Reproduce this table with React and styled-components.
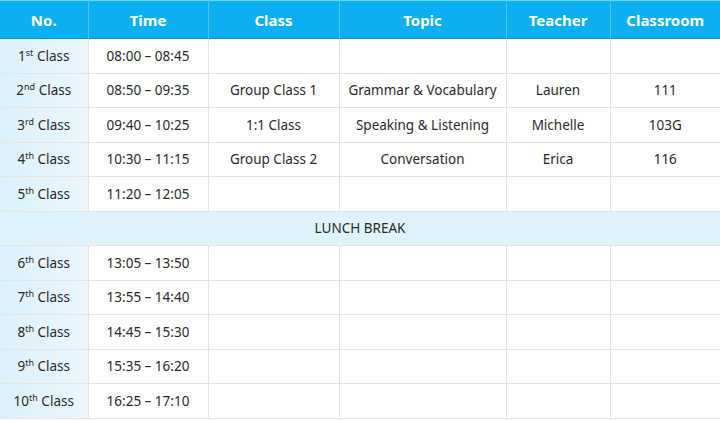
import React from "react";
import styled, { createGlobalStyle } from "styled-components";

const GlobalStyle = createGlobalStyle`
  html, body {
    margin: 0;
    padding: 0;
    background: #fff;
  }
  body {
    font-family: "Noto Sans", "Open Sans", sans-serif;
  }
`;

const Table = styled.table`
  width: 720px;
  border-collapse: collapse;
  table-layout: fixed;
  color: #2a2a2a;
  font-size: 13.5px;
`;

const Col = styled.col`
  width: ${(p) => p.$w}px;
`;

const HeadRow = styled.tr`
  height: 38px;
  background: #0cafef;
  border-top: 1px solid #6fd0f5;
  border-bottom: 1px solid #0a98d3;
`;

const Th = styled.th`
  color: #fff;
  font-weight: 700;
  font-size: 15px;
  padding: 0;
  border-left: 1px solid #4cc4f3;
  &:first-child {
    border-left: none;
  }
`;

const Row = styled.tr`
  height: 34.5px;
  border-bottom: 1px solid #e4e4e4;
`;

const Cell = styled.td`
  text-align: center;
  padding: 0;
  border-left: 1px solid #e4e4e4;
  &:first-child {
    border-left: none;
  }
`;

const NoCell = styled(Cell)`
  background: linear-gradient(to right, #dbf0fb, #eaf7fd);
`;

const BreakCell = styled.td`
  text-align: center;
  background: #def2fc;
`;

const Sup = styled.sup`
  font-size: 9px;
  vertical-align: 5px;
  line-height: 0;
`;

const widths = [88, 120, 131, 167, 104, 110];
const headers = ["No.", "Time", "Class", "Topic", "Teacher", "Classroom"];

const morning = [
  ["1", "st", "08:00 – 08:45", "", "", "", ""],
  ["2", "nd", "08:50 – 09:35", "Group Class 1", "Grammar & Vocabulary", "Lauren", "111"],
  ["3", "rd", "09:40 – 10:25", "1:1 Class", "Speaking & Listening", "Michelle", "103G"],
  ["4", "th", "10:30 – 11:15", "Group Class 2", "Conversation", "Erica", "116"],
  ["5", "th", "11:20 – 12:05", "", "", "", ""],
];

const afternoon = [
  ["6", "th", "13:05 – 13:50", "", "", "", ""],
  ["7", "th", "13:55 – 14:40", "", "", "", ""],
  ["8", "th", "14:45 – 15:30", "", "", "", ""],
  ["9", "th", "15:35 – 16:20", "", "", "", ""],
  ["10", "th", "16:25 – 17:10", "", "", "", ""],
];

const ClassRow = ({ data }) => {
  const [n, suf, time, cls, topic, teacher, room] = data;
  return (
    <Row>
      <NoCell>
        {n}
        <Sup>{suf}</Sup> Class
      </NoCell>
      <Cell>{time}</Cell>
      <Cell>{cls}</Cell>
      <Cell>{topic}</Cell>
      <Cell>{teacher}</Cell>
      <Cell>{room}</Cell>
    </Row>
  );
};

const App = () => {
  return (
    <>
      <GlobalStyle />
      <Table>
        <colgroup>
          {widths.map((w, i) => (
            <Col key={i} $w={w} />
          ))}
        </colgroup>
        <thead>
          <HeadRow>
            {headers.map((h) => (
              <Th key={h}>{h}</Th>
            ))}
          </HeadRow>
        </thead>
        <tbody>
          {morning.map((r) => (
            <ClassRow key={r[0]} data={r} />
          ))}
          <Row>
            <BreakCell colSpan={6}>LUNCH BREAK</BreakCell>
          </Row>
          {afternoon.map((r) => (
            <ClassRow key={r[0]} data={r} />
          ))}
        </tbody>
      </Table>
    </>
  );
};

export default App;
